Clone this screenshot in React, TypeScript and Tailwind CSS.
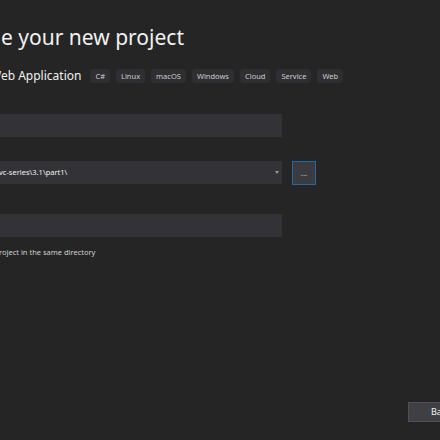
import React from "react";

const tags = ["C#", "Linux", "macOS", "Windows", "Cloud", "Service", "Web"];

export default function App() {
  return (
    <div
      className="w-[440px] h-[440px] overflow-hidden bg-[#252526] text-[#f1f1f1] flex flex-col"
      style={{ fontFamily: '"Noto Sans", "Open Sans", sans-serif' }}
    >
      <h1 className="pt-[23px] text-[21px] leading-[28px] font-normal text-[#f1f1f1] pl-[1px] whitespace-nowrap">
        e your new project
      </h1>
      <div className="mt-[17px] flex items-center h-[16px] whitespace-nowrap">
        <span className="text-[12px] leading-[16px] ml-[-10px] text-[#f1f1f1]">Web Application</span>
        <div className="ml-[9px] flex items-center gap-[6px]">
          {tags.map((t) => (
            <span
              key={t}
              className="h-[14px] px-[5px] rounded-[3px] bg-[#2f2f33] text-[7.5px] leading-[14px] text-[#cccccc]"
            >
              {t}
            </span>
          ))}
        </div>
      </div>

      <div className="mt-[30px] w-[282px] h-[23px] bg-[#333337]" />

      <div className="mt-[24px] flex items-start">
        <div className="w-[282px] h-[23px] bg-[#333337] flex items-center whitespace-nowrap overflow-hidden">
          <span className="ml-[-1px] text-[7.5px] leading-[23px] text-[#f1f1f1] flex-1">
            vc-series\3.1\part1\
          </span>
          <span className="mr-[3px] w-0 h-0 border-l-[2.5px] border-r-[2.5px] border-t-[3px] border-l-transparent border-r-transparent border-t-[#999999]" />
        </div>
        <button className="ml-[10px] w-[24px] h-[24px] bg-[#3a3a3f] border border-[#1c6aa8] text-[#cccccc] text-[8px] leading-[18px] flex items-center justify-center">
          ...
        </button>
      </div>

      <div className="mt-[29px] w-[282px] h-[23px] bg-[#333337]" />

      <div className="mt-[9px] text-[7.5px] leading-[12px] text-[#d0d0d0] whitespace-nowrap ml-[-1px]">
        roject in the same directory
      </div>

      <div className="flex-1" />

      <div className="mb-[18px] flex justify-end mr-[-40px]">
        <button className="w-[72px] h-[20px] bg-[#3f3f46] border border-[#4f4f56] text-[9px] leading-[18px] text-[#f1f1f1] text-left pl-[22px]">
          Back
        </button>
      </div>
    </div>
  );
}
